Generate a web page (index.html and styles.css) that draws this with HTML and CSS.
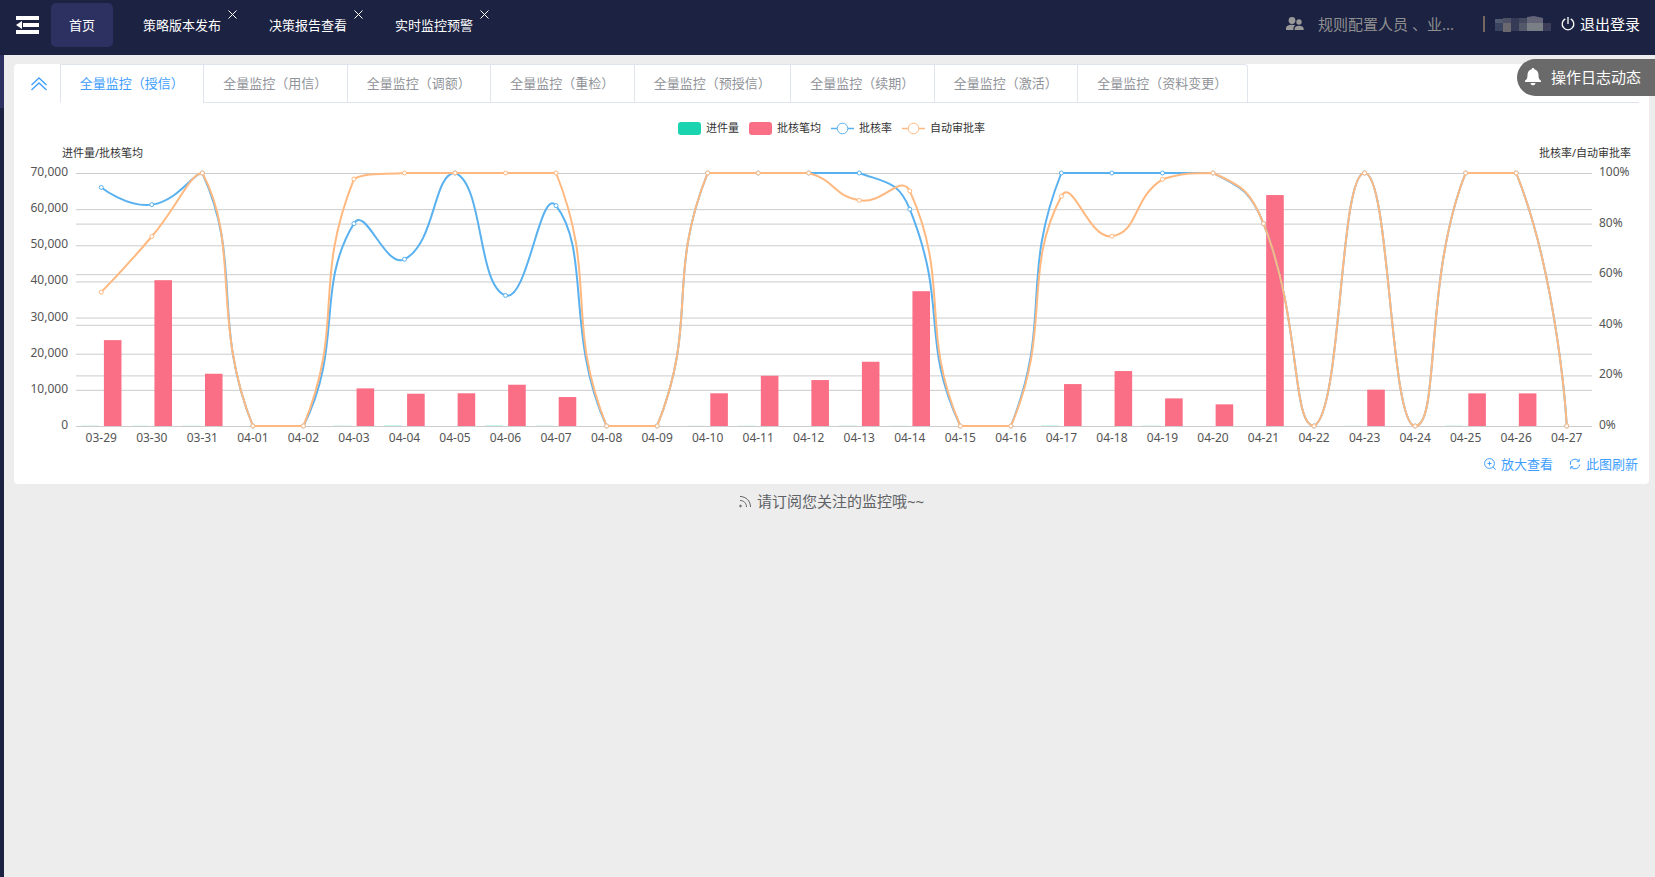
FILE: index.html
```html
<!DOCTYPE html>
<html lang="zh-CN">
<head>
<meta charset="utf-8">
<meta name="viewport" content="width=device-width, initial-scale=1">
<title>首页</title>
<link rel="stylesheet" href="styles.css">
</head>
<body>
<header class="topbar">
  <button class="menu-toggle" type="button" aria-label="收起菜单">
    <svg width="23" height="20" viewBox="0 0 23 20" fill="#fff"><path d="M0 1h23v4H0zM7 8h16v4H7zM0 15h23v4H0zM0 10l6-4v8z"/></svg>
  </button>
  <nav class="pages">
    <a class="page-tab page-tab-active" href="#home">首页</a>
    <div class="page-item"><a class="page-tab" href="#publish">策略版本发布</a><button class="page-close" type="button" aria-label="关闭策略版本发布"><svg width="9" height="9" viewBox="0 0 9 9"><path d="M.5.5l8 8M8.500.5l-8 8"/></svg></button></div>
    <div class="page-item"><a class="page-tab" href="#report">决策报告查看</a><button class="page-close" type="button" aria-label="关闭决策报告查看"><svg width="9" height="9" viewBox="0 0 9 9"><path d="M.5.5l8 8M8.500.5l-8 8"/></svg></button></div>
    <div class="page-item"><a class="page-tab" href="#alert">实时监控预警</a><button class="page-close" type="button" aria-label="关闭实时监控预警"><svg width="9" height="9" viewBox="0 0 9 9"><path d="M.5.5l8 8M8.500.5l-8 8"/></svg></button></div>
  </nav>
  <div class="account">
    <svg class="people" width="18" height="14" viewBox="0 0 18 14" fill="#999"><circle cx="6" cy="3.500" r="3.400"/><circle cx="13" cy="5" r="2.700"/><path d="M0 13v-1.500C0 9 2.500 7.800 6 7.800c1.300 0 2.400.2 3.300.5-1.300.9-1.900 2-1.900 3.300V13zM8.600 13v-1.300c0-2 1.900-3 4.500-3s4.600 1 4.600 3V13z"/></svg>
    <span class="roles">规则配置人员 、业...</span>
    <span class="divider"></span>
    <svg class="user-mask" width="56" height="16" viewBox="0 0 56 16" aria-label="用户名">
      <path fill="#3a4360" d="M0 3h8v12H0z"/><path fill="#505a70" d="M0 3h8v4H0z"/><path fill="#4c5165" d="M8 2h8v6H8z"/><path fill="#6b6870" d="M8 7h8v9H8z"/><path fill="#353b57" d="M16 2h8v13h-8z"/><path fill="#454960" d="M24 2h8v5h-8z"/><path fill="#545969" d="M24 7h8v8h-8z"/><path fill="#65657a" d="M32 1l7-1 9 2v5H32z"/><path fill="#7a7e85" d="M32 7h16v8H32z"/><path fill="#3b3d58" d="M48 7h8v8h-8z"/>
    </svg>
    <button class="logout" type="button">
      <svg width="14" height="14" viewBox="0 0 14 14" fill="none" stroke="#fff" stroke-width="1.300"><path d="M7 0v7M4.300 1.900a5.800 5.800 0 1 0 5.400 0"/></svg>退出登录</button>
  </div>
</header>

<div class="body">
  <aside class="rail"><div class="rail-current"></div></aside>
  <main class="content">
    <section class="card">
      <div class="tabbar">
        <button class="collapse" type="button" aria-label="收起">
          <svg width="16" height="14" viewBox="0 0 16 14" fill="none" stroke="#409eff" stroke-width="1.300"><path d="M.5 8L8 1l7.500 7M.5 13L8 6l7.500 7"/></svg>
        </button>
        <div class="tabs" role="tablist">
          <button class="tab tab-active" type="button" role="tab" aria-selected="true">全量监控（授信）</button>
          <button class="tab" type="button" role="tab">全量监控（用信）</button>
          <button class="tab" type="button" role="tab">全量监控（调额）</button>
          <button class="tab" type="button" role="tab">全量监控（重检）</button>
          <button class="tab" type="button" role="tab">全量监控（预授信）</button>
          <button class="tab" type="button" role="tab">全量监控（续期）</button>
          <button class="tab" type="button" role="tab">全量监控（激活）</button>
          <button class="tab" type="button" role="tab">全量监控（资料变更）</button>
        </div>
        <div class="tab-rest"></div>
      </div>

      <div class="legend">
        <span class="legend-item"><i class="swatch swatch-green"></i>进件量</span>
        <span class="legend-item"><i class="swatch swatch-pink"></i>批核笔均</span>
        <span class="legend-item"><svg width="23" height="13" viewBox="0 0 23 13" fill="#fff" stroke="#5ab1ef"><path d="M0 6.500h23" stroke-width="1.500"/><circle cx="11.500" cy="6.500" r="5.300"/></svg>批核率</span>
        <span class="legend-item"><svg width="23" height="13" viewBox="0 0 23 13" fill="#fff" stroke="#ffb980"><path d="M0 6.500h23" stroke-width="1.500"/><circle cx="11.500" cy="6.500" r="5.300"/></svg>自动审批率</span>
      </div>
      <div class="axis-names"><span>进件量/批核笔均</span><span>批核率/自动审批率</span></div>
      <svg class="chart" id="chart" role="img" aria-label="全量监控（授信）趋势图"></svg>

      <div class="card-actions">
        <button class="action" type="button"><svg width="12" height="12" viewBox="0 0 12 12" fill="none" stroke="#409eff"><circle cx="5.500" cy="5.500" r="4.900"/><path d="M9 9l2.700 2.700M3.500 5.500h4M5.500 3.500v4"/></svg>放大查看</button>
        <button class="action" type="button"><svg width="12" height="12" viewBox="0 0 12 12" fill="none" stroke="#409eff"><path d="M1.500 3.500v3.200M1.300 5.500C1.500 3 3.500 1.200 6 1.200c1.600 0 2.900.6 3.800 1.800M7.700 3.300h2.500V.8M10.700 6.500C10.500 9 8.500 10.800 6 10.800c-1.600 0-2.900-.6-3.800-1.800M4.300 8.700H1.800v2.500"/></svg>此图刷新</button>
      </div>
    </section>
    <p class="hint"><svg width="13" height="13" viewBox="0 0 13 13" fill="none" stroke="#606266"><path d="M1 1.500c6 0 10.500 4.500 10.500 10.500M1 5.500c3.800 0 6.500 2.700 6.500 6.500"/><circle cx="1.500" cy="11" r=".8" fill="#606266"/></svg>请订阅您关注的监控哦~~</p>
  </main>
</div>

<button class="log-feed" type="button">
  <svg width="16" height="18" viewBox="0 0 16 18" fill="#fff"><path d="M8 0c.8 0 1.300.5 1.300 1.200C12 1.800 13.500 4 13.500 6.800c0 3.800.8 4.700 2.500 6V14H0v-1.200c1.700-1.300 2.500-2.200 2.500-6C2.500 4 4 1.800 6.700 1.200 6.700.5 7.200 0 8 0zM5.500 15h5C10.300 16.500 9.200 17.300 8 17.300S5.700 16.500 5.500 15z"/></svg>操作日志动态</button>
<script src="chart.js"></script>
</body>
</html>
```
FILE: styles.css
```css
* { box-sizing: border-box; }

body {
  margin: 0;
  min-height: 100vh;
  display: flex;
  flex-direction: column;
  background: #ededed;
  color: #606266;
  font: 13px/20px "Noto Sans", "Noto Sans CJK SC", sans-serif;
}

button {
  padding: 0;
  border: 0;
  background: none;
  font: inherit;
  color: inherit;
  cursor: pointer;
}

a { color: inherit; text-decoration: none; }
svg { display: block; flex: none; }

.topbar {
  height: 55px;
  display: flex;
  align-items: flex-start;
  padding: 3px 15px 0 16px;
  background: #1c2242;
  color: #fff;
  white-space: nowrap;
}
.menu-toggle { padding-top: 12px; }
.pages { display: flex; gap: 12px; margin-left: 12px; }
.page-item { position: relative; }
.page-tab {
  display: block;
  padding: 12px 18px;
  border-radius: 5px;
}
.page-tab-active { background: #2d3162; }
.page-close {
  position: absolute;
  top: 7px;
  right: 2px;
}
.page-close svg { fill: none; stroke: #fff; }

.account {
  display: flex;
  align-items: center;
  height: 42px;
  margin-left: auto;
  font-size: 15px;
}
.people { margin-right: 14px; }
.roles { width: 165px; color: #8f8f8f; }
.divider {
  width: 2px;
  height: 16px;
  margin-right: 10px;
  background: #75665f;
}
.logout {
  display: flex;
  align-items: center;
  gap: 5px;
  margin-left: 10px;
}

.body { flex: 1; display: flex; }
.rail { flex: none; width: 4px; background: #1c2242; }
.rail-current { height: 53px; background: #2d3162; }
.content { flex: 1; min-width: 0; padding: 9px 6px 0 10px; }

.card {
  border-radius: 4px;
  background: #fff;
  padding-bottom: 10px;
}
.tabbar { display: flex; height: 39px; padding-right: 10px; }
.collapse {
  display: flex;
  justify-content: center;
  align-items: center;
  width: 46px;
  padding-left: 4px;
}
.tabs {
  display: flex;
  flex: 0 0 auto;
  width: 73.1%;
  border-top: 1px solid #dfe4ed;
  border-right: 1px solid #dfe4ed;
  border-top-right-radius: 4px;
}
.tab {
  flex: 1 0 auto;
  padding: 0 19px 2px 18px;
  border-left: 1px solid #dfe4ed;
  border-bottom: 1px solid #dfe4ed;
  color: #909399;
  white-space: nowrap;
}
.tab-active { color: #409eff; border-bottom-color: #fff; }
.tab-rest { flex: 1; border-bottom: 1px solid #dfe4ed; }

.legend {
  display: flex;
  justify-content: center;
  gap: 10px;
  padding-top: 15px;
  font-size: 11px;
  color: #333;
}
.legend-item { display: flex; align-items: center; gap: 5px; }
.swatch { width: 23px; height: 13px; border-radius: 3px; }
.swatch-green { background: #19d4ae; }
.swatch-pink { background: #fa6e86; }
.axis-names {
  display: flex;
  justify-content: space-between;
  padding: 5px 18px 0 48px;
  font-size: 11px;
  color: #333;
}
.chart { width: 100%; height: 288px; }
.chart text { font-size: 12px; fill: #555; }

.card-actions {
  display: flex;
  justify-content: flex-end;
  gap: 16px;
  padding: 3px 11px 0 0;
  color: #409eff;
}
.action { display: flex; align-items: center; gap: 5px; }

.hint {
  display: flex;
  justify-content: center;
  align-items: center;
  gap: 5px;
  margin: 7px 0 0;
  font-size: 15px;
}

.log-feed {
  position: absolute;
  top: 59px;
  right: 0;
  display: flex;
  align-items: center;
  gap: 10px;
  height: 37px;
  padding: 0 14px 2px 8px;
  border-radius: 19px 0 0 19px;
  background: #6a6a6a;
  color: #fff;
  font-size: 15px;
}
```
FILE: chart.js
```js
const svg = document.getElementById('chart');
const dates = ['03-29', '03-30', '03-31'];
for (let d = 1; d <= 27; d++) dates.push('04-' + String(d).padStart(2, '0'));

const counts = [40, 30, 30, 0, 0, 40, 70, 0, 70, 40, 0, 0, 25, 30, 0, 40, 25, 0, 0, 60, 0, 40, 0, 0, 0, 20, 0, 40, 0, 0];
const averages = [23760, 40340, 14460, 0, 0, 10400, 8930, 9050, 11420, 8010, 0, 0, 9050, 13900, 12710, 17780, 37300, 0, 0, 11600, 15200, 7640, 5990, 63900, 0, 10040, 0, 9030, 9030, 0];
const approval = [94.3, 87.5, 100, 0, 0, 80, 65.9, 100, 51.6, 87.1, 0, 0, 100, 100, 100, 100, 85.7, 0, 0, 100, 100, 100, 100, 80, 0, 100, 0, 100, 100, 0];
const automatic = [52.9, 74.9, 100, 0, 0, 97.6, 100, 100, 100, 100, 0, 0, 100, 100, 100, 89.2, 92.9, 0, 0, 90.8, 75, 97.5, 100, 80, 0, 100, 0, 100, 100, 0];

const margin = { left: 62, right: 57, top: 10, plot: 253 };

// Cubic segments whose control points stay inside the bounds of the series.
function smoothPath(pts) {
  const ys = pts.map(p => p[1]);
  const lo = Math.min(...ys), hi = Math.max(...ys);
  const clamp = p => [p[0], Math.min(hi, Math.max(lo, p[1]))];
  let cp0 = pts[0];
  let d = 'M' + pts[0].join(' ');
  for (let i = 1; i < pts.length; i++) {
    const p = pts[i], prev = pts[i - 1], next = pts[i + 1];
    let cp1 = p, out = p;
    if (next) {
      const vx = next[0] - prev[0], vy = next[1] - prev[1];
      const a = Math.hypot(p[0] - prev[0], p[1] - prev[1]);
      const b = Math.hypot(next[0] - p[0], next[1] - p[1]);
      const r = b / (a + b);
      cp1 = [p[0] - vx * 0.5 * (1 - r), p[1] - vy * 0.5 * (1 - r)];
      out = [p[0] + vx * 0.5 * r, p[1] + vy * 0.5 * r];
    }
    d += 'C' + [...clamp(cp0), ...clamp(cp1), ...p].join(' ');
    cp0 = out;
  }
  return d;
}

function draw() {
  const width = svg.clientWidth;
  const x0 = margin.left, x1 = width - margin.right;
  const bottom = margin.top + margin.plot;
  const band = (x1 - x0) / dates.length;
  const bar = band * 0.8 / 2.3;
  const cx = i => x0 + band * (i + 0.5);
  const y = f => bottom - f * margin.plot;
  let out = '';
  const grid = f => { out += `<path d="M${x0} ${y(f) + 0.5}H${x1}" stroke="#ccc"/>`; };
  const label = (x, ty, text, anchor) => { out += `<text x="${x}" y="${ty}" text-anchor="${anchor}">${text}</text>`; };

  for (let i = 0; i <= 7; i++) {
    grid(i / 7);
    label(x0 - 8, y(i / 7) + 3, (i * 10000).toLocaleString('en-US'), 'end');
  }
  for (let i = 0; i <= 5; i++) {
    if (i % 5) grid(i / 5);
    label(x1 + 7, y(i / 5) + 3, i * 20 + '%', 'start');
  }
  dates.forEach((date, i) => {
    label(cx(i), bottom + 16, date, 'middle');
    const rect = (x, v, color) => {
      const h = v / 70000 * margin.plot;
      if (h) out += `<rect x="${x}" y="${bottom - h}" width="${bar}" height="${h}" fill="${color}"/>`;
    };
    rect(cx(i) - bar * 1.15, counts[i], '#19d4ae');
    rect(cx(i) + bar * 0.15, averages[i], '#fa6e86');
  });
  [[approval, '#5ab1ef'], [automatic, '#ffb980']].forEach(([rates, color]) => {
    const pts = rates.map((v, i) => [cx(i), y(v / 100)]);
    out += `<path d="${smoothPath(pts)}" fill="none" stroke="${color}" stroke-width="2" stroke-linejoin="bevel"/>`;
    pts.forEach(p => { out += `<circle cx="${p[0]}" cy="${p[1]}" r="2" fill="#fff" stroke="${color}"/>`; });
  });
  svg.innerHTML = out;
}

draw();
window.addEventListener('resize', draw);
```
